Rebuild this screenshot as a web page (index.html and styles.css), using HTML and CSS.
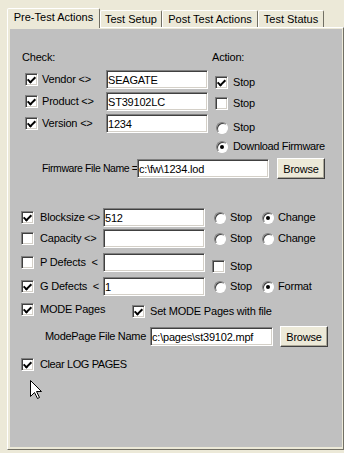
FILE: index.html
```html
<!DOCTYPE html>
<html lang="en">
<head>
  <meta charset="UTF-8"><title>Pre-Test Actions</title>
  <link rel="stylesheet" href="styles.css">
</head>
<body>
<div class="window">

  <div class="tabs">
    <div class="tab tab-pre active">Pre-Test Actions</div>
    <div class="tab tab-setup">Test Setup</div>
    <div class="tab tab-post">Post Test Actions</div>
    <div class="tab tab-status">Test Status</div>
  </div>

  <div class="panel">
    <div class="page">

      <!-- Drive identity check -->
      <section class="ident">
        <div class="col-check">
          <div class="head">Check:</div>
          <div class="id-row"><span class="cb on"></span><label>Vendor &lt;&gt;</label><input class="tb" type="text" value="SEAGATE"></div>
          <div class="id-row"><span class="cb on"></span><label>Product &lt;&gt;</label><input class="tb" type="text" value="ST39102LC"></div>
          <div class="id-row"><span class="cb on"></span><label>Version &lt;&gt;</label><input class="tb" type="text" value="1234"></div>
        </div>
        <div class="col-action">
          <div class="head">Action:</div>
          <div class="act act-1"><span class="cb on"></span>Stop</div>
          <div class="act act-2"><span class="cb"></span>Stop</div>
          <div class="act act-3"><span class="rb"></span>Stop</div>
          <div class="act act-4"><span class="rb on"></span>Download Firmware</div>
        </div>
      </section>

      <div class="file-row fw-row">
        <label>Firmware File Name =</label>
        <input class="tb" type="text" value="c:\fw\1234.lod">
        <button class="btn">Browse</button>
      </div>

      <!-- Drive parameters -->
      <section class="params">
        <div class="p-row">
          <span class="cb on"></span><label>Blocksize &lt;&gt;</label><input class="tb" type="text" value="512">
          <div class="opts"><span class="opt"><span class="rb"></span>Stop</span><span class="opt"><span class="rb on"></span>Change</span></div>
        </div>
        <div class="p-row">
          <span class="cb"></span><label>Capacity &lt;&gt;</label><input class="tb" type="text" value="">
          <div class="opts"><span class="opt"><span class="rb"></span>Stop</span><span class="opt"><span class="rb"></span>Change</span></div>
        </div>
        <div class="p-row">
          <span class="cb"></span><label>P Defects &nbsp;&lt;</label><input class="tb" type="text" value="">
          <div class="opts opts-low"><span class="opt opt-cb"><span class="cb"></span>Stop</span></div>
        </div>
        <div class="p-row">
          <span class="cb on"></span><label>G Defects &nbsp;&lt;</label><input class="tb" type="text" value="1">
          <div class="opts"><span class="opt"><span class="rb"></span>Stop</span><span class="opt"><span class="rb on"></span>Format</span></div>
        </div>
      </section>

      <!-- Mode / log pages -->
      <section class="mode">
        <div class="m-row">
          <span class="cb on"></span><label class="m-lbl">MODE Pages</label>
          <span class="cb on set-cb"></span><label class="set-lbl">Set MODE Pages with file</label>
        </div>
        <div class="file-row mp-row">
          <label>ModePage File Name</label>
          <input class="tb" type="text" value="c:\pages\st39102.mpf">
          <button class="btn">Browse</button>
        </div>
        <div class="m-row log-row">
          <span class="cb on"></span><label class="m-lbl">Clear LOG PAGES</label>
        </div>
      </section>

    </div>
  </div>

  <svg class="cursor" width="13" height="20" viewBox="0 0 13 20">
    <path d="M0.5 0.5 L0.5 16.5 L4.5 12.5 L7.5 18.5 L9.5 17.5 L6.5 11.5 L11.5 11.5 Z" fill="#fff" stroke="#000" stroke-width="1"/>
  </svg>
</div>
</body>
</html>
```

FILE: styles.css
```css
* { margin:0; padding:0; box-sizing:border-box; }
body { background:#ECE9D8; color:#000; font-family:"Liberation Sans", Arial, sans-serif; font-size:11px; line-height:13px; letter-spacing:-0.2px; }
.window { position:relative; width:344px; height:453px; overflow:hidden; }

/* Tabs */
.tabs { display:flex; align-items:flex-end; height:20px; margin:8px 0 -1px 7px; position:relative; z-index:1; }
.tab { height:17px; margin-bottom:1px; padding-top:2px; text-align:center; white-space:nowrap; background:#ECE9D8; letter-spacing:0;
  border:solid; border-width:1px 1px 0 1px; border-color:#fff #716F64 transparent #fff; border-radius:2px 2px 0 0;
}
.tab.active { height:20px; margin-bottom:0; }
.tab-pre { width:93px; }
.tab-setup { width:62px; }
.tab-post { width:96px; }
.tab-status { width:66px; }

.panel { margin-left:7px; width:337px; height:423px; padding:1px 1px 2px 2px;
  border:1px solid; border-color:#fff #716F64 #716F64 #fff;
}
.page { height:418px; background:#C0C0C0; padding-top:22px; }

/* Controls */
.tb { flex:none; width:102px; height:19px; padding:0 1px; font-family:inherit; font-size:11px; letter-spacing:inherit; color:#000; background:#fff;
  border:1px solid; border-color:#808080 #fff #fff #808080; box-shadow:inset 1px 1px #404040, inset -1px -1px #D4D0C8; outline:none;
}
.btn { flex:none; width:48px; height:21px; font-family:inherit; font-size:11px; letter-spacing:inherit; color:#000; background:#ECE9D8;
  border:1px solid; border-color:#fff #404040 #404040 #fff; box-shadow:inset -1px -1px #ACA899;
}
.cb { flex:none; width:13px; height:13px; display:flex; align-items:center; justify-content:center; background:#fff;
  border:1px solid; border-color:#808080 #fff #fff #808080; box-shadow:inset 1px 1px #404040, inset -1px -1px #D4D0C8;
}
.cb.on::after { content:""; width:3px; height:6px; margin-top:-2px; border:solid #000; border-width:0 2px 2px 0; transform:rotate(45deg); }
.rb { flex:none; width:12px; height:12px; border-radius:50%; display:flex; align-items:center; justify-content:center; background:#fff;
  border:1px solid; border-color:#808080 #fff #fff #808080; box-shadow:inset 1px 1px #404040;
}
.rb.on::after { content:""; width:4px; height:4px; border-radius:50%; background:#000; }

/* Identity section */
.ident { display:flex; }
.col-check { width:186px; margin-left:12px; }
.col-action { margin-left:4px; }
.head { height:13px; }
.id-row { display:flex; align-items:center; height:19px; padding-left:3px; margin-top:3px; }
.head + .id-row { margin-top:6px; }
.id-row label { width:64px; margin-left:4px; }

.act { display:flex; align-items:center; gap:5px; height:13px; padding-left:3px; white-space:nowrap; }
.act .rb { margin-left:1px; }
.act-1 { margin-top:12px; }
.act-2 { margin-top:8px; }
.act-3 { margin-top:11px; }
.act-4 { margin-top:6px; letter-spacing:-0.35px; }

/* File name rows */
.file-row { display:flex; align-items:center; height:21px; }
.fw-row { margin-top:5px; padding-left:32px; }
.fw-row label { width:95px; white-space:nowrap; font-size:10.5px; letter-spacing:-0.4px; }
.fw-row .tb { width:132px; }
.fw-row .btn { margin-left:8px; }

/* Parameters */
.params { margin-top:29px; }
.p-row { display:flex; align-items:center; height:19px; padding-left:11px; margin-top:5px; }
.p-row:first-child { margin-top:0; }
.p-row:nth-child(2) { margin-top:2px; }
.p-row label { width:63px; margin-left:6px; white-space:nowrap; }
.opts { display:grid; grid-template-columns:48px auto; margin-left:9px; }
.opt { display:flex; align-items:center; gap:4px; }
.opts-low { align-self:flex-end; margin:0 0 -1px 7px; }
.opt-cb { gap:5px; }

/* Mode pages */
.mode { margin-top:7px; }
.m-row { display:flex; align-items:flex-start; padding-left:11px; }
.m-lbl { margin-left:6px; width:92px; white-space:nowrap; }
.set-cb, .set-lbl { margin-top:2px; }
.set-lbl { margin-left:5px; }
.mp-row { margin-top:8px; padding-left:35px; }
.mp-row label { width:105px; white-space:nowrap; letter-spacing:-0.3px; }
.mp-row .tb { width:123px; }
.mp-row .btn { margin-left:7px; }
.log-row { margin-top:11px; }
.log-row .m-lbl { letter-spacing:-0.4px; }

.cursor { position:absolute; left:30px; top:380px; }
```
